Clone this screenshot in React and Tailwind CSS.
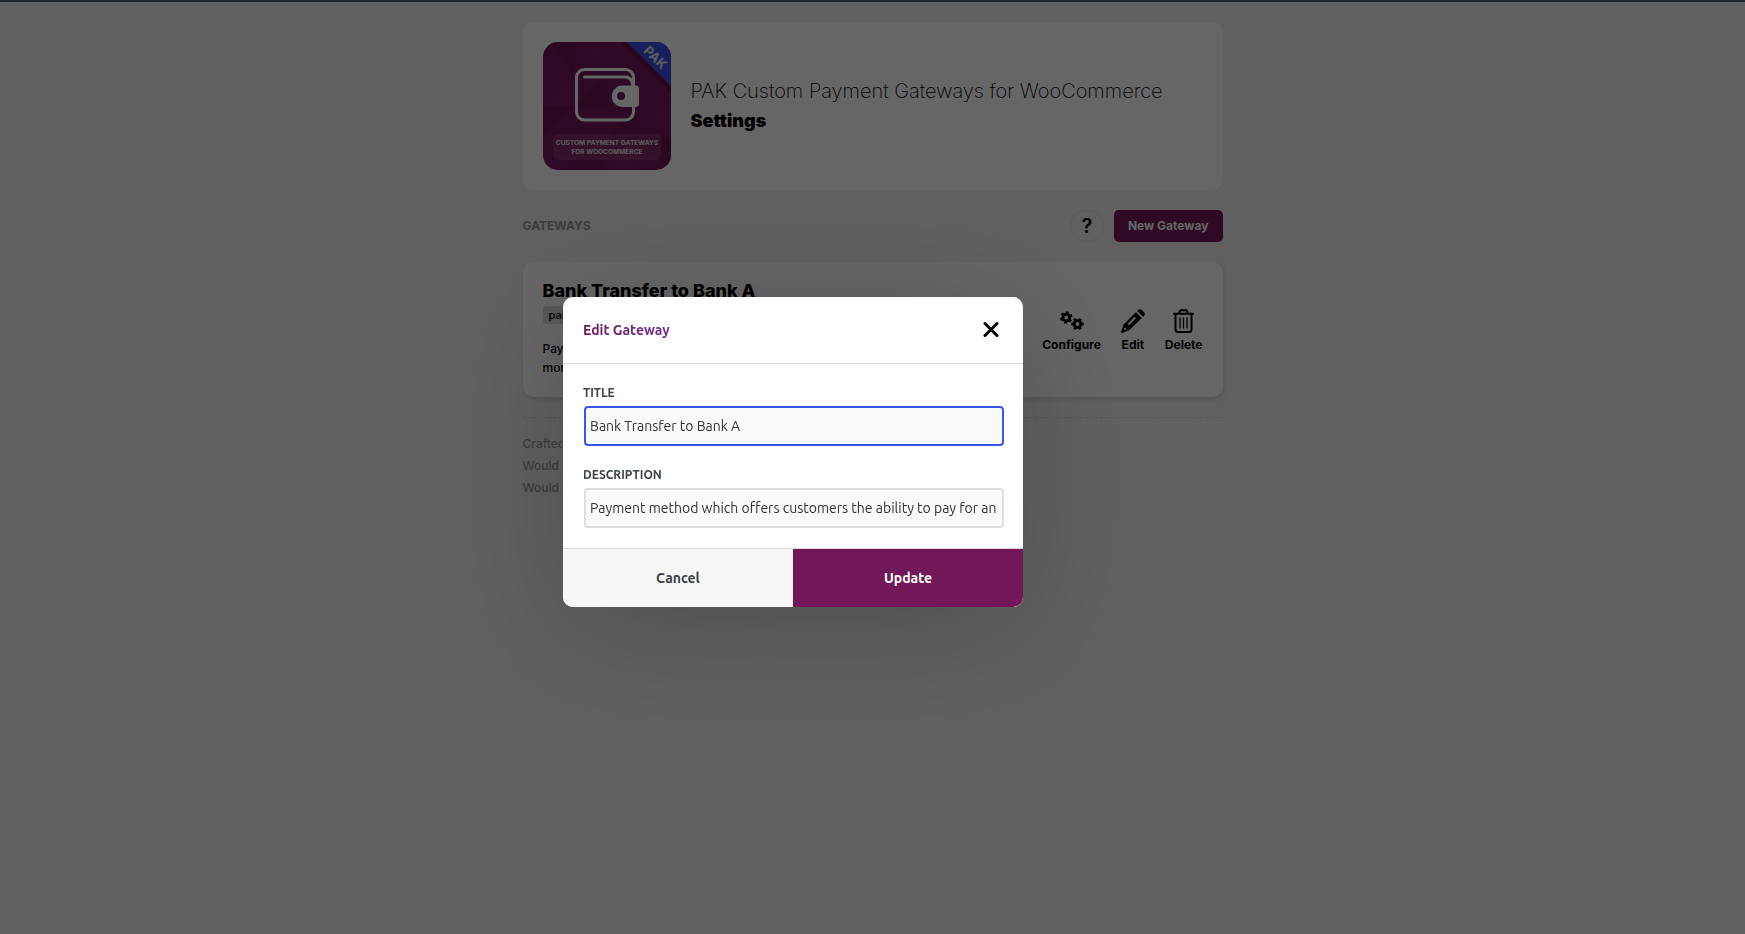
import React from "react";

function Logo() {
  return (
    <svg viewBox="0 0 128 128" className="size-32 shrink-0" role="img" aria-label="PAK Custom Payment Gateways for WooCommerce">
      <defs>
        <clipPath id="logo-clip">
          <rect width="128" height="128" rx="15" />
        </clipPath>
      </defs>
      <g clipPath="url(#logo-clip)">
        <rect width="128" height="128" fill="#721858" />
        <g fill="#5c1047" opacity="0.35">
          <path d="M0 0h32v32zM32 64 64 32v32zM64 96l32-32v32zM0 64h32l-32 32zM96 96h32v32zM32 96v32h32z" />
        </g>
        <g fill="#8a2a6d" opacity="0.2">
          <path d="M32 0h32v32zM0 64l32-32v32zM64 128l32-32v32zM96 64h32v32z" />
        </g>
        <path d="M80 0 128 48" stroke="#000" strokeOpacity="0.2" strokeWidth="4" />
        <path d="M84 0h44v44z" fill="#3d4fe8" />
        <text x="112" y="20" textAnchor="middle" transform="rotate(45 112 16)" fontSize="13" fontWeight="700" fill="#e4e4ee" fontFamily="Inter, sans-serif">PAK</text>
        <rect x="33.5" y="27.500" width="57" height="50.500" rx="8" fill="none" stroke="#fff" strokeWidth="3" />
        <path d="M41.500 35H82q7 0 7.500 8" fill="none" stroke="#fff" strokeWidth="3" strokeLinecap="round" />
        <path fillRule="evenodd" fill="#fff" d="M79.500 43.500H93q3 0 3 3V62q0 3-3 3H79.500a10.750 10.750 0 0 1 0-21.500ZM78 50a4 4 0 1 0 0 8 4 4 0 0 0 0-8Z" />
        <rect x="10" y="92" width="108" height="26" rx="6" fill="#fff" opacity="0.1" />
        <g fill="#fff" opacity="0.85" fontSize="6.600" fontWeight="700" textAnchor="middle" fontFamily="Inter, sans-serif">
          <text x="64" y="103">CUSTOM PAYMENT GATEWAYS</text>
          <text x="64" y="112">FOR WOOCOMMERCE</text>
        </g>
      </g>
    </svg>
  );
}

function Gear({ cx, cy, turn }) {
  return (
    <g transform={`translate(${cx} ${cy}) rotate(${turn})`} stroke="currentColor" fill="none">
      <circle r="3.400" strokeWidth="2.800" />
      {[0, 60, 120, 180, 240, 300].map((angle) => (
        <path key={angle} d="M0-4v-2.200" strokeWidth="2.800" transform={`rotate(${angle})`} />
      ))}
    </g>
  );
}

function GearsIcon() {
  return (
    <svg viewBox="0 0 24 24" className="size-6" aria-hidden="true">
      <Gear cx={6.3} cy={8.5} turn={10} />
      <Gear cx={17.5} cy={15} turn={30} />
    </svg>
  );
}

function PencilIcon() {
  return (
    <svg viewBox="0 0 24 24" className="size-6" fill="currentColor" aria-hidden="true">
      <path d="M16.200 1.900 17.500.9q1.700-1.300 3.400.1l2.200 2.200q1.400 1.700.1 3.400l-1 1.300z" />
      <path fillRule="evenodd" d="M14.900 3.200 20.800 9.100 8.600 20.700 1.300 23.900Q-.2 24.300.2 22.800L2.600 15.500ZM13.600 7.800 6.600 14.800 8 16.200 15 9.200ZM4 18.300 3 21.200 5.900 20.100Z" />
    </svg>
  );
}

function TrashIcon() {
  return (
    <svg viewBox="0 0 24 24" className="size-6" fill="none" stroke="currentColor" strokeLinecap="round" strokeLinejoin="round" aria-hidden="true">
      <path strokeWidth="2" d="M2 4.800h19M7 4.500l.6-2q.4-1.300 1.700-1.300h4.400q1.300 0 1.700 1.300l.6 2M3.500 5v15.500q0 2.500 2.500 2.500h11q2.500 0 2.500-2.500V5" />
      <path strokeWidth="1.300" d="M8 9v10M11.500 9v10M15 9v10" />
    </svg>
  );
}

function GatewayAction({ icon, label }) {
  return (
    <button type="button" className="flex flex-col items-center gap-1 text-[12px] leading-4 font-bold text-black">
      {icon}
      {label}
    </button>
  );
}

function Field({ id, label, value, focused }) {
  return (
    <div className="flex flex-col gap-[5px]">
      <label htmlFor={id} className="text-[12px] leading-4 font-bold text-[#3c434a] uppercase">{label}</label>
      <input
        id={id}
        type="text"
        defaultValue={value}
        className={
          "ml-px -mr-px h-10 rounded border-2 bg-[#fafafa] px-1 text-[14px] text-[#2c3338] outline-none " +
          (focused ? "border-[#3b55f0]" : "border-[#dddddd]")
        }
      />
    </div>
  );
}

function EditDialog() {
  return (
    <div className="fixed inset-0 flex items-center justify-center bg-black/60 pr-[159px] pb-[30px] font-[Ubuntu,'Noto_Sans',sans-serif]">
      <div role="dialog" aria-labelledby="dialog-title" className="w-full max-w-[460px] rounded-[10px] bg-white shadow-[0_20px_120px_rgba(0,0,0,0.2)]">
        <header className="flex h-[67px] items-center justify-between border-b border-[#dddddd] px-5">
          <h2 id="dialog-title" className="bg-linear-to-r from-[#721858] to-[#6a2a94] bg-clip-text text-[14px] leading-5 font-bold text-transparent">Edit Gateway</h2>
          <button type="button" aria-label="Close" className="p-1">
            <svg viewBox="0 0 16 16" className="size-4" stroke="#000" strokeWidth="3" strokeLinecap="round" aria-hidden="true">
              <path d="m2 1.500 12 12M14 1.500 2 13.500" />
            </svg>
          </button>
        </header>
        <div className="flex flex-col gap-[21px] px-5 pt-[21px] pb-5">
          <Field id="gateway-title" label="Title" value="Bank Transfer to Bank A" focused />
          <Field id="gateway-description" label="Description" value="Payment method which offers customers the ability to pay for an order" />
        </div>
        <footer className="grid h-[59px] grid-cols-2 overflow-hidden rounded-b-[10px] border-t border-[#dddddd] text-[14px] font-bold">
          <button type="button" className="bg-[#f7f7f7] text-[#3c434a]">Cancel</button>
          <button type="button" className="bg-[#721858] text-white">Update</button>
        </footer>
      </div>
    </div>
  );
}

export default function App() {
  return (
    <div className="min-h-screen bg-[#f0f0f0] pt-[22px] font-[Inter,sans-serif] text-black">
      <div className="fixed inset-x-0 top-0 z-10 h-0.5 bg-[#1d2327]" />
      <main className="mx-auto flex max-w-[700px] flex-col gap-5">
        <header className="flex items-center gap-5 rounded-[10px] bg-white p-5">
          <Logo />
          <h1 className="text-[20px] leading-[29px] font-extralight">
            PAK Custom Payment Gateways for WooCommerce
            <span className="block text-[18px] font-black">Settings</span>
          </h1>
        </header>

        <div className="flex items-center justify-between">
          <h2 className="text-[12px] font-bold text-[#999999] uppercase">Gateways</h2>
          <div className="flex items-center gap-2.5">
            <button type="button" aria-label="Help" className="flex h-8 w-[34px] items-center justify-center rounded-full border border-[#e0e0e0] text-[20px] font-semibold">?</button>
            <button type="button" className="h-8 rounded-[5px] bg-[#721858] px-3.5 text-[12px] font-bold text-white">New Gateway</button>
          </div>
        </div>

        <section className="flex items-center justify-between gap-5 rounded-[10px] bg-white px-5 pt-[17px] pb-5 shadow-[1px_2px_4px_rgba(0,0,0,0.15)]">
          <div className="w-[470px]">
            <h3 className="text-[18px] leading-6 font-extrabold">Bank Transfer to Bank A</h3>
            <span className="mt-[3px] block w-fit rounded bg-[#dcdcdc] px-1.5 text-[11px] leading-[18px] font-medium">pak_bank_transfer_a</span>
            <p className="mt-[15px] text-[12px] leading-[19px] font-medium">
              Payment method which offers customers the ability to pay for an
              <br />
              money transfer.
            </p>
          </div>
          <div className="flex gap-5 pt-1.5">
            <GatewayAction icon={<GearsIcon />} label="Configure" />
            <GatewayAction icon={<PencilIcon />} label="Edit" />
            <GatewayAction icon={<TrashIcon />} label="Delete" />
          </div>
        </section>

        <footer className="border-t border-dashed border-[#d8d8d8] pt-[15px] text-[12px] leading-[22px] font-medium text-[#999999]">
          <p>Crafted by PAK</p>
          <p>Would you like to leave a review?</p>
          <p>Would you like to report an issue?</p>
        </footer>
      </main>
      <EditDialog />
    </div>
  );
}
